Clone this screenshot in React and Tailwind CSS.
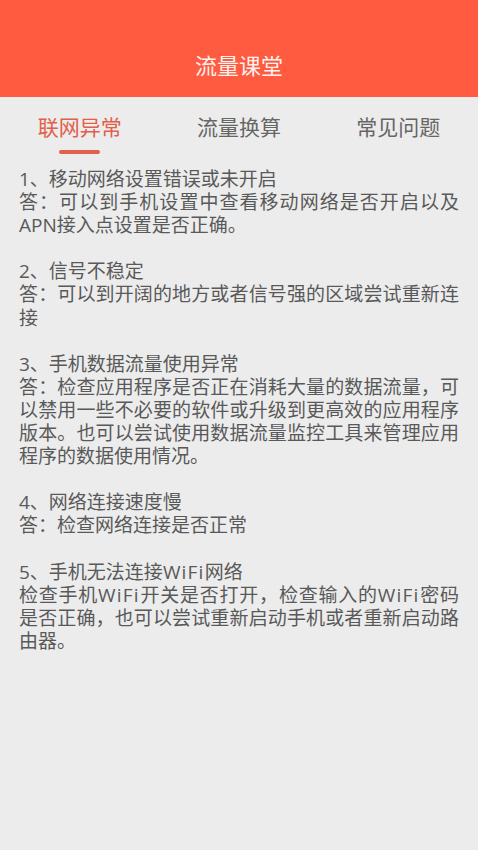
const tabs = ["联网异常", "流量换算", "常见问题"];

const items = [
  {
    title: "1、移动网络设置错误或未开启",
    body: "答：可以到手机设置中查看移动网络是否开启以及APN接入点设置是否正确。",
  },
  {
    title: "2、信号不稳定",
    body: "答：可以到开阔的地方或者信号强的区域尝试重新连接",
  },
  {
    title: "3、手机数据流量使用异常",
    body: "答：检查应用程序是否正在消耗大量的数据流量，可以禁用一些不必要的软件或升级到更高效的应用程序版本。也可以尝试使用数据流量监控工具来管理应用程序的数据使用情况。",
  },
  {
    title: "4、网络连接速度慢",
    body: "答：检查网络连接是否正常",
  },
  {
    title: "5、手机无法连接WiFi网络",
    body: "检查手机WiFi开关是否打开，检查输入的WiFi密码是否正确，也可以尝试重新启动手机或者重新启动路由器。",
  },
];

// latin words render a touch wider on the device
const withLatin = (s) =>
  s.split(/(WiFi)/).map((part, i) =>
    part === "WiFi" ? (
      <span key={i} className="tracking-[1.2px]">
        {part}
      </span>
    ) : (
      part
    )
  );

export default function App() {
  return (
    <div
      className="min-h-[850px] w-full bg-[#ececec]"
      style={{ fontFamily: '"Open Sans", "Noto Sans CJK SC", sans-serif' }}
    >
      {/* Header */}
      <header className="h-[97px] bg-[#fe5b41] flex items-end justify-center pb-[21px]">
        <h1 className="text-[22px] leading-[22px] text-[#fdf1ee]">流量课堂</h1>
      </header>

      {/* Tabs */}
      <nav className="grid grid-cols-3 pt-[18px]">
        {tabs.map((t, i) => (
          <div key={t} className="flex flex-col items-center">
            <span
              className={`text-[21px] leading-[24px] ${
                i === 0 ? "text-[#e0604a]" : "text-[#666666]"
              }`}
            >
              {t}
            </span>
            <div
              className={`mt-[11px] h-[4px] w-[41px] rounded-full ${
                i === 0 ? "bg-[#e0604a]" : "bg-transparent"
              }`}
            />
          </div>
        ))}
      </nav>

      {/* Content */}
      <main className="px-[19px] pt-[14px] text-[19px] leading-[23.1px] text-[#595959] text-justify">
        {items.map((it) => (
          <section key={it.title} className="mb-[23.1px]">
            <p>{withLatin(it.title)}</p>
            <p>{withLatin(it.body)}</p>
          </section>
        ))}
      </main>
    </div>
  );
}
